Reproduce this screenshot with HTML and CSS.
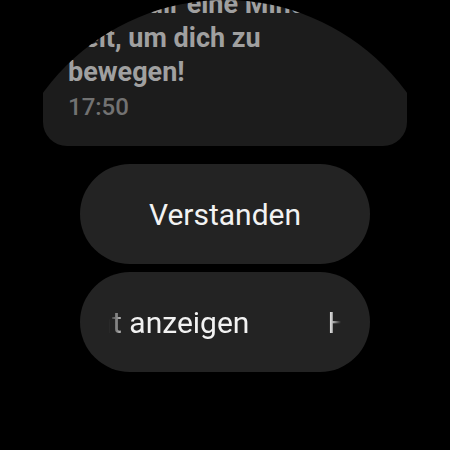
FILE: index.html
```html
<!DOCTYPE html>
<html lang="de">
  <head>
    <meta charset="UTF-8" />
    <meta name="viewport" content="width=device-width, initial-scale=1.0" />
    <title>Bewegungserinnerung</title>
    <link rel="stylesheet" href="styles.css">
  </head>
  <body>
    <div class="screen">
      <div class="card">
        <div class="message">Nimm dir eine Minute<br>Zeit, um dich zu<br>bewegen!</div>
        <div class="time">17:50</div>
      </div>
      <button class="chip">Verstanden</button>
      <button class="chip">
        <span class="marquee">
          <span class="track">
            <span>Heute nicht anzeigen</span>
            <span>Heute nicht anzeigen</span>
          </span>
        </span>
      </button>
    </div>
  </body>
</html>
```

FILE: styles.css
```css
html,
body {
  margin: 0;
  background: #000;
}
body {
  font-family: Roboto, "Noto Sans", sans-serif;
}
.screen {
  width: 450px;
  height: 450px;
  border-radius: 50%;
  overflow: hidden;
  background: #000;
  display: flex;
  flex-direction: column;
  align-items: center;
}
.card {
  box-sizing: border-box;
  width: 364px;
  margin-top: -13px;
  padding: 0 25px 21px;
  background: #1c1c1c;
  border-radius: 0 0 24px 24px;
}
.message {
  white-space: nowrap;
  font-size: 27px;
  line-height: 34px;
  font-weight: bold;
  color: #a0a0a0;
}
.time {
  font-size: 24px;
  line-height: 36px;
  font-weight: 500;
  color: #727272;
}
.chip {
  width: 290px;
  height: 100px;
  margin-top: 18px;
  border: none;
  border-radius: 50px;
  background: #232323;
  color: #f2f2f2;
  font-family: Roboto, "Noto Sans", sans-serif;
  font-size: 30px;
  padding: 0;
  display: flex;
  align-items: center;
  justify-content: center;
}
.chip + .chip {
  margin-top: 8px;
}
.marquee {
  width: 232px;
  overflow: hidden;
  white-space: nowrap;
  -webkit-mask-image: linear-gradient(to right, transparent 0, #000 16px, #000 calc(100% - 12px), transparent 100%);
  mask-image: linear-gradient(to right, transparent 0, #000 16px, #000 calc(100% - 12px), transparent 100%);
}
.track {
  display: flex;
  gap: 78px;
  transform: translateX(-140px);
}
```
